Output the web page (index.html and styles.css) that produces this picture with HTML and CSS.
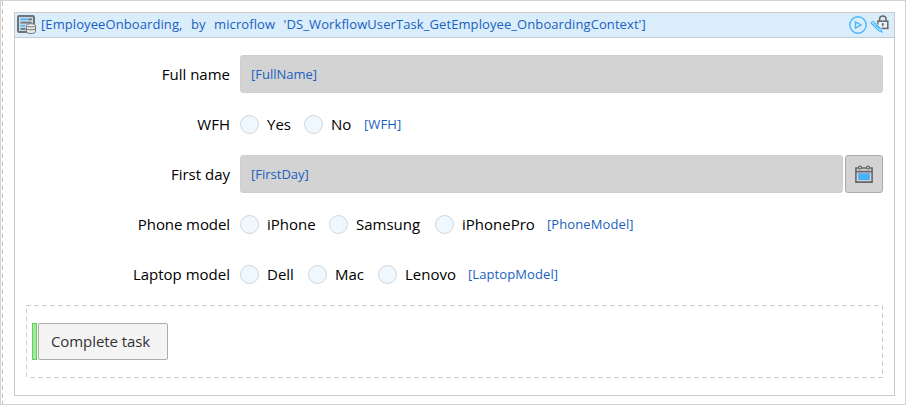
FILE: index.html
```html
<!DOCTYPE html>
<html lang="en">
<head>
<meta charset="utf-8">
<title>Employee onboarding</title>
<link rel="stylesheet" href="styles.css">
</head>
<body>
<main class="canvas">
  <section class="panel">
    <header class="bar">
      <svg class="source" width="20" height="20" viewBox="0 0 20 20" fill="none">
        <rect x="1" y="1" width="16" height="16" rx="1" fill="#c3dae9" stroke="#6d7378" stroke-width="2"/>
        <path d="M3.5 4.3h7" stroke="#55b8f5" stroke-width="2"/>
        <path d="M11 4.3h4M3.5 7.7h11M3.5 13.8h5" stroke="#6d7378" stroke-width="1.7"/>
        <path d="M3.5 10.8h4.5" stroke="#55b8f5" stroke-width="1.8"/>
        <path d="M9.5 10.5v6.3c0 2.3 9 2.3 9 0v-6.3" fill="#e8e8e8" stroke="#77797c"/>
        <ellipse cx="14" cy="10.3" rx="4.5" ry="1.6" fill="#eee" stroke="#77797c"/>
        <path d="M9.5 13.3c0 2 9 2 9 0" stroke="#77797c"/>
      </svg>
      <span class="bind title">[EmployeeOnboarding, by microflow 'DS_WorkflowUserTask_GetEmployee_OnboardingContext']</span>
      <svg class="play" width="18" height="18" viewBox="0 0 18 18" fill="none" stroke="#4db6fa" stroke-width="1.4">
        <circle cx="9" cy="9" r="8.2"/><path d="M6.5 6v6l5.5-3z"/>
      </svg>
      <svg class="lock" width="20" height="20" viewBox="0 0 20 20" fill="none">
        <rect x="7.8" y="6.2" width="10" height="7.2" fill="#e7f3fc" stroke="#666" stroke-width="1.5"/>
        <path d="M9.6 6V4.2a3.2 3.2 0 0 1 6.4 0V6" stroke="#666" stroke-width="1.5"/>
        <path d="M12.8 8.3v3M11.8 9h2" stroke="#555" stroke-width="1.2"/>
        <path d="M1 8l2-1.8 7.7 7.5 1.2 3.3-3.2-1.3z" fill="#daedfb" stroke="#daedfb" stroke-width="2.4"/>
        <path d="M1 8l2-1.8 7.7 7.5 1.2 3.3-3.2-1.3zM3 10l2.1-2M5.3 9.8l4.3 4.4" stroke="#4db6fa" stroke-width="1.1"/>
      </svg>
    </header>
    <div class="form">
      <div class="row"><span class="label">Full name</span><div class="input"><span class="bind">[FullName]</span></div></div>
      <div class="row"><span class="label">WFH</span>
        <span class="option w64"><i class="radio"></i>Yes</span>
        <span class="option w60"><i class="radio"></i>No</span>
        <span class="bind wide">[WFH]</span></div>
      <div class="row"><span class="label">First day</span><div class="input"><span class="bind">[FirstDay]</span></div>
        <div class="picker"><svg width="18" height="20" viewBox="0 0 18 20" fill="none">
          <path d="M.9 4h16.2v14.1H.9zM.9 7.6h16.2" stroke="#66686b" stroke-width="1.6"/>
          <rect x="3.2" y="9.3" width="11.6" height="6.8" fill="#48b0f7"/>
          <circle cx="5" cy="3.6" r="1.5" fill="#d3d3d3" stroke="#66686b" stroke-width="1.2"/><circle cx="13" cy="3.6" r="1.5" fill="#d3d3d3" stroke="#66686b" stroke-width="1.2"/>
        </svg></div></div>
      <div class="row"><span class="label tight">Phone model</span>
        <span class="option w89"><i class="radio"></i>iPhone</span>
        <span class="option w106"><i class="radio"></i>Samsung</span>
        <span class="option w112"><i class="radio"></i>iPhonePro</span>
        <span class="bind wide">[PhoneModel]</span></div>
      <div class="row"><span class="label">Laptop model</span>
        <span class="option w68"><i class="radio"></i>Dell</span>
        <span class="option w70"><i class="radio"></i>Mac</span>
        <span class="option w90"><i class="radio"></i>Lenovo</span>
        <span class="bind wide">[LaptopModel]</span></div>
    </div>
    <footer class="actions"><i class="outcome"></i><div class="button">Complete task</div></footer>
  </section>
</main>
</body>
</html>
```
FILE: styles.css
```css
* { box-sizing: border-box; }
body { margin: 0; background: #fff; }
.canvas {
  width: 906px; height: 405px; padding: 11px 10px 8px 13px;
  border: 1px solid #d3d3d3;
  background: repeating-linear-gradient(#c8c8c8 0 5px, transparent 5px 8px) 1px 0 / 1px 100% no-repeat;
  font: 15px/20px "Open Sans", "Noto Sans", sans-serif;
  color: #000; white-space: nowrap;
}
.panel { width: 881px; height: 384px; border: 1px solid #cacbcc; }
.bar {
  display: flex; align-items: center; height: 25px; padding: 0 4px 0 2px;
  background: #daedfb; border-bottom: 1px solid #c6ccd0;
}
.source { flex: none; margin-right: 4px; }
.play { margin-left: auto; margin-right: 3px; }
.bind { font-size: 13px; color: #1a5fc0; }
.title { margin-top: -2px; word-spacing: 5px; letter-spacing: .09px; }
.wide { letter-spacing: .1px; }
.form { padding: 17px 11px 0; }
.row { display: flex; align-items: center; height: 38px; margin-bottom: 12px; }
.label { flex: none; width: 204px; margin-right: 10px; text-align: right; }
.tight { letter-spacing: -.08px; }
.input {
  flex: 1; height: 38px; padding: 8px 10px; background: #d3d3d3;
  border: 1px solid #cfcfcf; border-radius: 3px; line-height: 20px;
}
.input .bind { display: inline-block; vertical-align: top; }
.picker {
  display: flex; align-items: center; justify-content: center;
  width: 38px; height: 38px; margin-left: 2px;
  background: #d3d3d3; border: 1px solid #aaa; border-radius: 3px;
}
.option { display: flex; flex: none; align-items: center; }
.radio {
  width: 19px; height: 19px; margin-right: 8px; border: 1px solid #d2d6d9;
  border-radius: 50%; background: #eff7ff;
}
.w60 { width: 60px; } .w64 { width: 64px; } .w68 { width: 68px; } .w70 { width: 70px; }
.w89 { width: 89px; } .w90 { width: 90px; } .w106 { width: 106px; } .w112 { width: 112px; }
.actions {
  display: flex; height: 73px; margin: 0 11px; padding: 18px 6px;
  background:
    repeating-linear-gradient(90deg, #ccc 0 5px, transparent 5px 8px) 0 0 / 100% 1px no-repeat,
    repeating-linear-gradient(90deg, #ccc 0 5px, transparent 5px 8px) 4px 100% / 100% 1px no-repeat,
    repeating-linear-gradient(transparent 0 4px, #ccc 4px 8px) 0 0 / 1px 100% no-repeat,
    repeating-linear-gradient(#ccc 0 5px, transparent 5px 8px) 100% 0 / 1px 100% no-repeat;
}
.outcome { width: 5px; height: 37px; margin-right: 1px; background: #a5e8a0; border: 1px solid #5fd35a; }
.button {
  width: 130px; height: 37px; padding: 7px 12px; color: #333; letter-spacing: -.08px;
  background: #f4f4f4; border: 1px solid #adadad; border-radius: 2px;
}
```
